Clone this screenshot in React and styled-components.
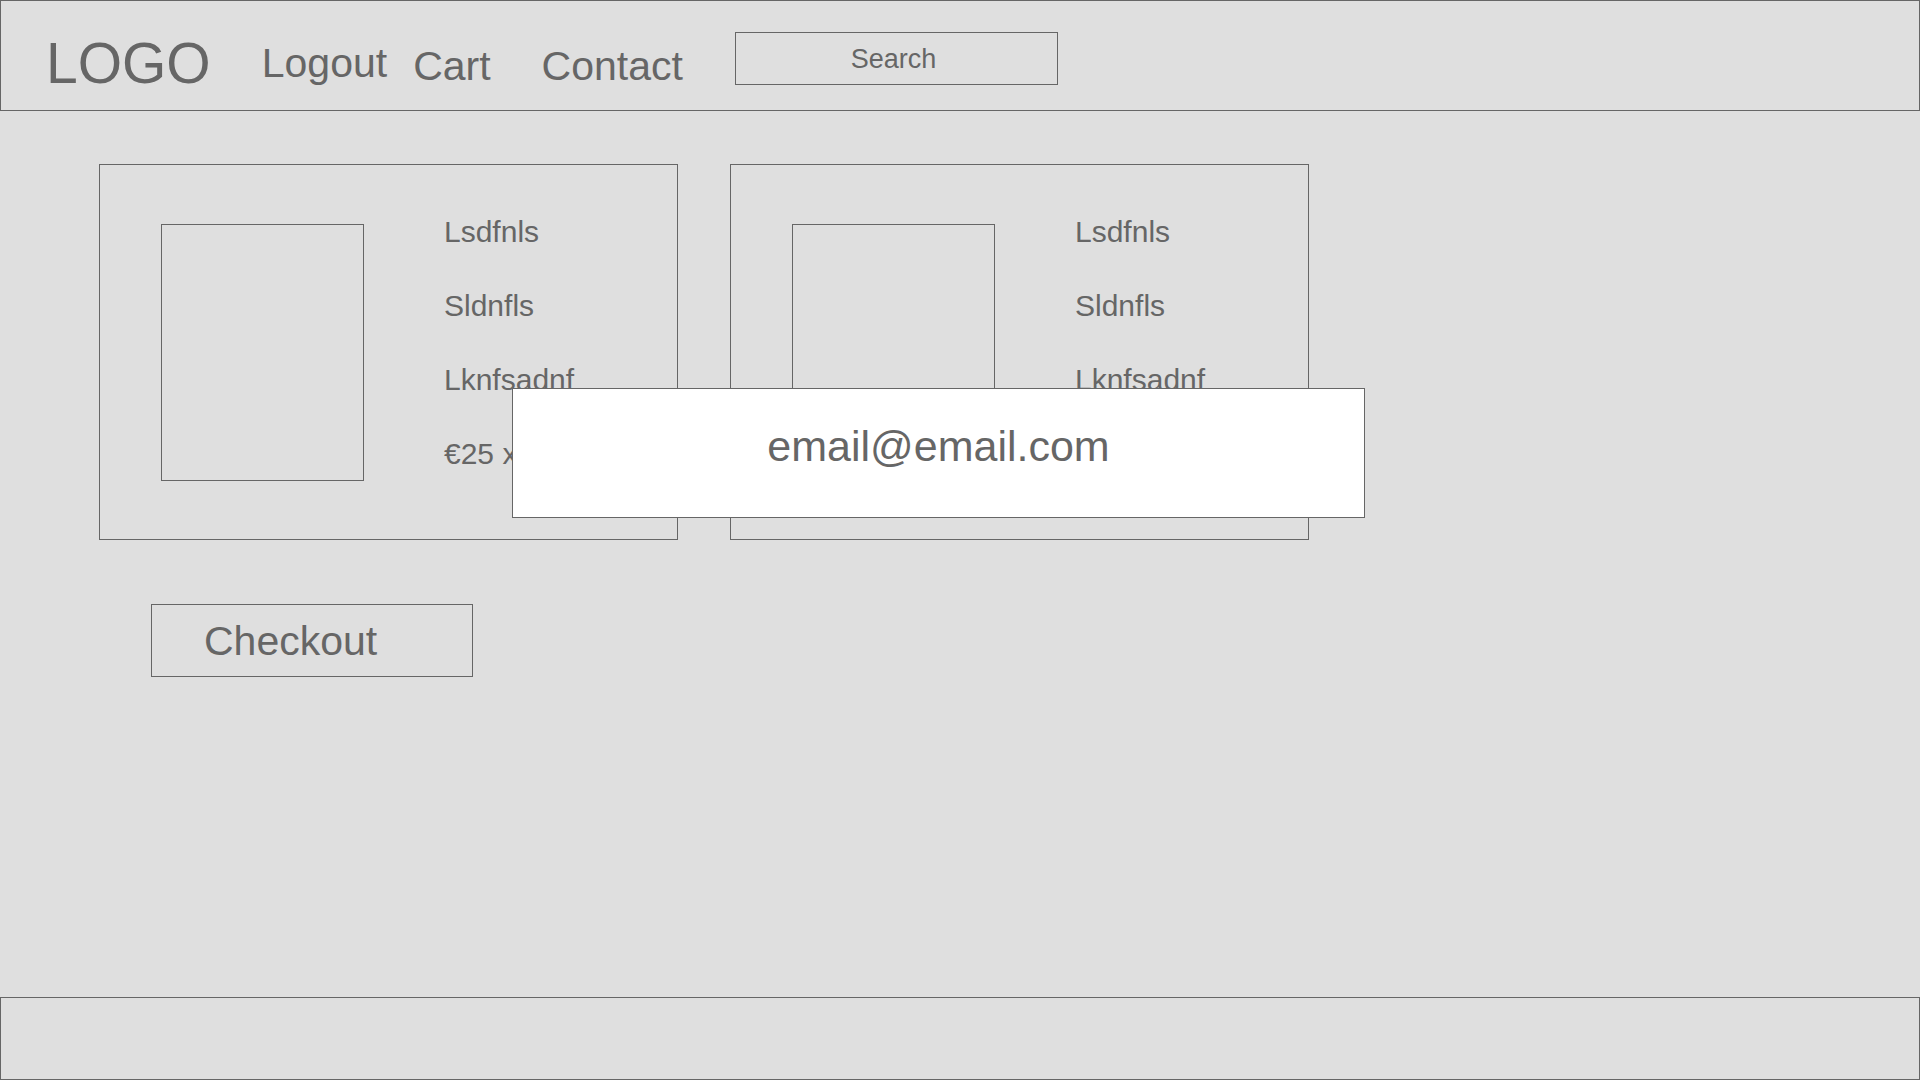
import React from "react";
import styled, { createGlobalStyle } from "styled-components";

const GlobalStyle = createGlobalStyle`
  html, body {
    margin: 0;
    padding: 0;
    background: #dfdfdf;
  }
  body {
    font-family: "Liberation Sans", Arial, Helvetica, sans-serif;
    color: #666;
  }
  * { box-sizing: border-box; }
`;

const Page = styled.div`
  position: relative;
  width: 1920px;
  height: 1080px;
  display: flex;
  flex-direction: column;
  background: #dfdfdf;
  overflow: hidden;
`;

const Header = styled.header`
  height: 111px;
  border: 1px solid #666;
  display: flex;
  align-items: flex-start;
  padding-left: 45px;
  flex-shrink: 0;
`;

const Logo = styled.div`
  font-size: 57px;
  line-height: 1;
  margin-top: 34px;
  color: #666;
`;

const NavLink = styled.a`
  font-size: 41px;
  line-height: 1;
  color: #666;
  text-decoration: none;
  margin-left: ${(p) => p.$ml}px;
  margin-top: ${(p) => p.$mt}px;
`;

const SearchBox = styled.div`
  margin-left: 52px;
  margin-top: 31px;
  width: 323px;
  height: 53px;
  border: 1px solid #666;
  display: flex;
  align-items: center;
  justify-content: center;
  font-size: 27px;
  color: #666;
  padding: 2px 6px 0 0;
`;

const Main = styled.main`
  flex: 1;
  display: flex;
  flex-direction: column;
  padding: 53px 0 0 99px;
`;

const CardRow = styled.div`
  display: flex;
  gap: 52px;
`;

const Card = styled.div`
  width: 579px;
  height: 376px;
  border: 1px solid #666;
  display: flex;
  align-items: flex-start;
  padding-left: 61px;
`;

const ImageBox = styled.div`
  width: 203px;
  height: 257px;
  border: 1px solid #666;
  margin-top: 59px;
  flex-shrink: 0;
`;

const InfoList = styled.div`
  margin-left: 80px;
  margin-top: 30px;
  display: flex;
  flex-direction: column;
`;

const InfoLine = styled.div`
  font-size: 30px;
  line-height: 74px;
  white-space: nowrap;
  color: #666;
`;

const CheckoutButton = styled.button`
  margin-top: 64px;
  margin-left: 52px;
  width: 322px;
  height: 73px;
  border: 1px solid #666;
  background: transparent;
  display: flex;
  align-items: center;
  padding: 2px 0 0 52px;
  font-family: "Liberation Sans", Arial, Helvetica, sans-serif;
  font-size: 41px;
  color: #666;
  cursor: pointer;
`;

const Footer = styled.footer`
  height: 83px;
  border: 1px solid #666;
  flex-shrink: 0;
`;

const EmailPopup = styled.div`
  position: absolute;
  left: 512px;
  top: 388px;
  width: 853px;
  height: 130px;
  background: #fff;
  border: 1px solid #666;
  padding-top: 36px;
  text-align: center;
  font-size: 43px;
  line-height: 1;
  color: #666;
`;

const items = [
  ["Lsdfnls", "Sldnfls", "Lknfsadnf", "€25 x 1"],
  ["Lsdfnls", "Sldnfls", "Lknfsadnf", "€25 x 1"],
];

export default function App() {
  return (
    <>
      <GlobalStyle />
      <Page>
        <Header>
          <Logo>LOGO</Logo>
          <NavLink $ml={51} $mt={42}>Logout</NavLink>
          <NavLink $ml={26} $mt={45}>Cart</NavLink>
          <NavLink $ml={51} $mt={45}>Contact</NavLink>
          <SearchBox>Search</SearchBox>
        </Header>
        <Main>
          <CardRow>
            {items.map((lines, i) => (
              <Card key={i}>
                <ImageBox />
                <InfoList>
                  {lines.map((l, j) => (
                    <InfoLine key={j}>{l}</InfoLine>
                  ))}
                </InfoList>
              </Card>
            ))}
          </CardRow>
          <CheckoutButton>Checkout</CheckoutButton>
        </Main>
        <Footer />
        <EmailPopup>email@email.com</EmailPopup>
      </Page>
    </>
  );
}
